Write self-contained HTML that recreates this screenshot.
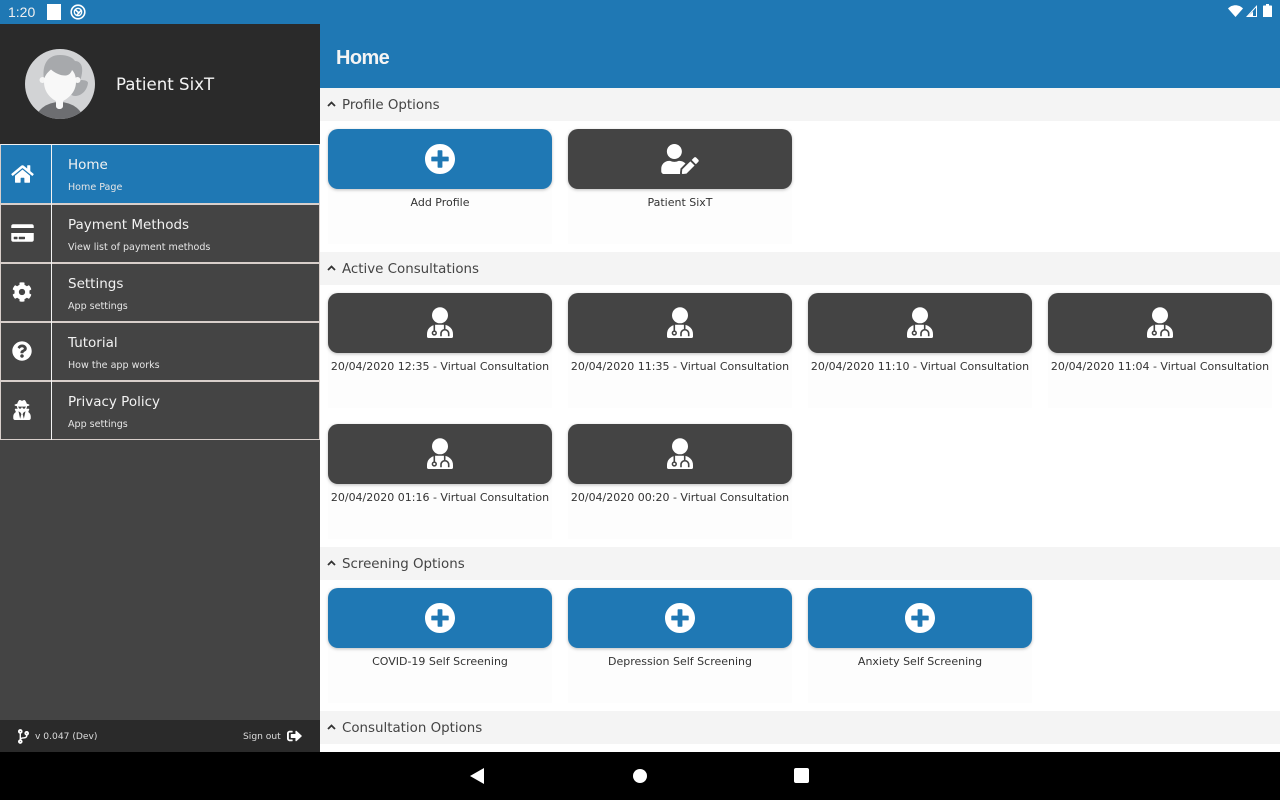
<!DOCTYPE html>
<html lang="en"><head><meta charset="utf-8"><title>Home</title>
<style>
*{box-sizing:border-box;margin:0;padding:0}
html,body{width:1280px;height:800px;overflow:hidden;background:#fff;font-family:"DejaVu Sans","Liberation Sans",sans-serif}
.a{position:absolute;white-space:nowrap}
svg{position:absolute;display:block;fill:#fff}
#status{left:0;top:0;width:1280px;height:24px;background:#1f78b4}
#side{left:0;top:24px;width:320px;height:728px;background:#444}
#prof{left:0;top:24px;width:320px;height:120px;background:#2a2a2a}
.item{position:absolute;left:0;width:320px;height:59px;background:#444;border:1px solid #d8cfcb}
.item.on{height:60px;background:#1f78b4;border-top-color:#f2f2f2}
.item i{position:absolute;left:50px;top:-1px;bottom:-1px;width:1px;background:#f4f4f4}
.t{position:absolute;left:67px;color:#f2f2f2;font-size:13.500px;line-height:18px;white-space:nowrap}
.s{position:absolute;left:67px;color:#e6e6e6;font-size:9.550px;line-height:12px;white-space:nowrap}
#top{left:320px;top:24px;width:960px;height:64px;background:#1f78b4}
.band{position:absolute;left:320px;width:960px;height:33px;background:#f4f4f4;color:#444;font-size:13.400px;line-height:36px;padding-left:22px}
.band svg{left:7px;top:13px;fill:none;stroke:#333;stroke-width:1.800}
.cell{position:absolute;width:224px;height:115px;background:#fdfdfd}
.btn{position:absolute;left:0;top:0;width:224px;height:60px;border-radius:10px;background:#444;box-shadow:0 1px 3px rgba(0,0,0,.25)}
.btn.b{background:#1f78b4}
.lab{position:absolute;left:-10px;width:244px;top:66px;text-align:center;font-size:11px;line-height:16px;color:#333;white-space:nowrap}
.plus{left:97px;top:15px;width:30px;height:30px}
.md{left:99px;top:14px;width:26px;height:32px}
#foot{left:0;top:720px;width:320px;height:32px;background:#2a2a2a;color:#ddd;font-size:9.150px;line-height:34px}
#nav{left:0;top:752px;width:1280px;height:48px;background:#000}
</style></head><body>
<svg width="0" height="0" style="position:absolute"><defs>
<symbol id="plus" viewBox="8 8 496 496"><path d="M256 8C119 8 8 119 8 256s111 248 248 248 248-111 248-248S393 8 256 8zm144 276c0 6.600-5.400 12-12 12h-92v92c0 6.600-5.400 12-12 12h-56c-6.600 0-12-5.400-12-12v-92h-92c-6.600 0-12-5.400-12-12v-56c0-6.600 5.400-12 12-12h92v-92c0-6.600 5.400-12 12-12h56c6.600 0 12 5.400 12 12v92h92c6.600 0 12 5.400 12 12v56z"/></symbol>
<symbol id="md" viewBox="0 0 26 32"><circle cx="13" cy="8.300" r="8"/><path d="M0 29.500V27C0 22 3.500 18.700 8 17.700H18C22.500 18.700 26 22 26 27V29.500C26 30.500 25.300 31 24.500 31H1.500C.7 31 0 30.500 0 29.500Z"/><path d="M7.300 17.500V24M17.700 17.500V22.500M14 29.200V26.500a3.850 3.850 0 0 1 7.700 0v2.700" fill="none" stroke="#444" stroke-width="1.600"/><circle cx="7.300" cy="26" r="1.900" fill="#fff" stroke="#444" stroke-width="1.500"/></symbol>
<symbol id="chev" viewBox="0 0 9 6"><path d="M1 5l3.500-3.500L8 5"/></symbol>
</defs></svg>

<div class="a" id="status">
  <span class="a" style="left:8px;top:3px;font:14px/18px 'Liberation Sans',sans-serif;color:#f0f0f0">1:20</span>
  <div class="a" style="left:47px;top:4px;width:14px;height:16px;background:#fff"></div>
  <svg style="left:70px;top:4px" width="16" height="16" viewBox="0 0 16 16"><circle cx="8" cy="8" r="6.800" fill="none" stroke="#fff" stroke-width="1.600"/><circle cx="8" cy="8" r="3.700" fill="none" stroke="#fff" stroke-width="1.300"/><path d="M5 5.500L9.500 9.500M7 11L11 6.500" stroke="#fff" stroke-width="1.600" fill="none"/></svg>
  <svg style="left:1228px;top:5px" width="15" height="12" viewBox="0 0 15 12"><path d="M0 3.500C4-.8 11-.8 15 3.500L7.500 12z"/></svg>
  <svg style="left:1246px;top:5px" width="11" height="12" viewBox="0 0 11 12"><path d="M11 0v12H0zM10 2.500L2.500 11H10z" fill-rule="evenodd"/><path d="M7 6.500V12H1.500z"/></svg>
  <svg style="left:1263px;top:4px" width="9" height="13" viewBox="0 0 9 13"><path d="M3 0h3v1.500h2.200c.5 0 .8.300.8.800V13H0V2.300c0-.5.300-.8.800-.8H3z"/></svg>
</div>

<div class="a" id="side"></div>
<div class="a" id="prof">
  <svg style="left:25px;top:25px" width="70" height="70" viewBox="0 0 70 70">
    <defs><clipPath id="cc"><circle cx="35" cy="35" r="35"/></clipPath></defs>
    <g clip-path="url(#cc)">
      <rect width="70" height="70" fill="#d2d3d5"/>
      <ellipse cx="34.500" cy="72" rx="24" ry="19" fill="#6d6e71"/>
      <path d="M19 30C17 18 21 6 35 6 43 6 48 9 50 12 56 12 58 18 57 24 56.500 27 56 29 55.500 31 60 31 63 32 63 34 62 42 56 47 50 47 46 47 45 44 45 42L20 34Z" fill="#a7a9ac"/>
      <circle cx="17.500" cy="31" r="3" fill="#f5f5f5"/><circle cx="52.500" cy="31" r="3" fill="#f5f5f5"/>
      <path d="M19 33C19 27 22 24 26 20.500 30 24 36 27 41 26.500 44 26 46 24 47 21 50 24 51 28 51 33 51 44 42 50 38 52V57C38 61 31 61 31 57V52C27 50 19 44 19 33Z" fill="#f8f8f8"/>
    </g>
  </svg>
  <span class="a" style="left:116px;top:50px;font-size:16.600px;line-height:22px;color:#f4f4f4">Patient SixT</span>
</div>

<div class="item on" style="top:144px"><i></i>
  <svg style="left:10px;top:19px" width="23" height="20" viewBox="0 0 576 512"><path d="M280.370 148.260L96 300.110V464a16 16 0 0 0 16 16l112.060-.29a16 16 0 0 0 15.920-16V368a16 16 0 0 1 16-16h64a16 16 0 0 1 16 16v95.640a16 16 0 0 0 16 16.050L464 480a16 16 0 0 0 16-16V300L295.670 148.260a12.190 12.190 0 0 0-15.300 0zM571.600 251.470L488 182.560V44.050a12 12 0 0 0-12-12h-56a12 12 0 0 0-12 12v72.610L318.470 43a48 48 0 0 0-61 0L4.340 251.470a12 12 0 0 0-1.600 16.900l25.500 31A12 12 0 0 0 45.150 301l235.220-193.740a12.190 12.190 0 0 1 15.300 0L530.900 301a12 12 0 0 0 16.900-1.600l25.500-31a12 12 0 0 0-1.700-16.930z"/></svg>
  <span class="t" style="top:11px">Home</span><span class="s" style="top:37px">Home Page</span></div>
<div class="item" style="top:204px"><i></i>
  <svg style="left:10px;top:18px" width="23" height="20" viewBox="0 0 576 512"><path d="M0 432c0 26.500 21.500 48 48 48h480c26.500 0 48-21.500 48-48V256H0v176zm192-68c0-6.600 5.400-12 12-12h136c6.600 0 12 5.400 12 12v40c0 6.600-5.400 12-12 12H204c-6.600 0-12-5.400-12-12v-40zm-128 0c0-6.600 5.400-12 12-12h72c6.600 0 12 5.400 12 12v40c0 6.600-5.400 12-12 12H76c-6.600 0-12-5.400-12-12v-40zM576 80v48H0V80c0-26.500 21.500-48 48-48h480c26.500 0 48 21.500 48 48z"/></svg>
  <span class="t" style="top:11px">Payment Methods</span><span class="s" style="top:37px">View list of payment methods</span></div>
<div class="item" style="top:263px"><i></i>
  <svg style="left:11px;top:18px" width="20" height="20" viewBox="0 0 512 512"><path d="M487.400 315.700l-42.600-24.600c4.300-23.200 4.300-47 0-70.200l42.600-24.600c4.900-2.800 7.100-8.600 5.500-14-11.100-35.600-30-67.800-54.700-94.600-3.800-4.100-10-5.100-14.800-2.300L380.800 110c-17.900-15.400-38.500-27.300-60.800-35.100V25.800c0-5.600-3.900-10.500-9.400-11.700-36.700-8.200-74.300-7.800-109.200 0-5.500 1.200-9.400 6.100-9.400 11.700V75c-22.200 7.900-42.800 19.800-60.800 35.100L88.700 85.500c-4.900-2.800-11-1.900-14.800 2.300-24.700 26.700-43.600 58.900-54.700 94.600-1.700 5.400.6 11.200 5.500 14L67.300 221c-4.300 23.200-4.300 47 0 70.200l-42.600 24.600c-4.900 2.800-7.100 8.600-5.500 14 11.100 35.600 30 67.800 54.700 94.600 3.800 4.100 10 5.100 14.800 2.300l42.600-24.600c17.900 15.400 38.500 27.300 60.800 35.100v49.200c0 5.600 3.900 10.500 9.400 11.700 36.700 8.200 74.300 7.800 109.200 0 5.500-1.200 9.400-6.100 9.400-11.700v-49.200c22.200-7.900 42.800-19.800 60.800-35.100l42.600 24.600c4.900 2.800 11 1.900 14.800-2.300 24.700-26.700 43.600-58.900 54.700-94.600 1.500-5.500-.7-11.300-5.600-14.100zM256 336c-44.100 0-80-35.900-80-80s35.900-80 80-80 80 35.900 80 80-35.900 80-80 80z"/></svg>
  <span class="t" style="top:11px">Settings</span><span class="s" style="top:37px">App settings</span></div>
<div class="item" style="top:322px"><i></i>
  <svg style="left:11px;top:18px" width="20" height="20" viewBox="0 0 512 512"><path d="M504 256c0 136.997-111.043 248-248 248S8 392.997 8 256C8 119.083 119.043 8 256 8s248 111.083 248 248zM262.655 90c-54.497 0-89.255 22.957-116.549 63.758-3.536 5.286-2.353 12.415 2.715 16.258l34.699 26.310c5.205 3.947 12.621 3.008 16.665-2.122 17.864-22.658 30.113-35.797 57.303-35.797 20.429 0 45.698 13.148 45.698 32.958 0 14.976-12.363 22.667-32.534 33.976C247.128 238.528 216 254.941 216 296v4c0 6.627 5.373 12 12 12h56c6.627 0 12-5.373 12-12v-1.333c0-28.462 83.186-29.647 83.186-106.667 0-58.002-60.165-102-116.531-102zM256 338c-25.365 0-46 20.635-46 46 0 25.364 20.635 46 46 46s46-20.636 46-46c0-25.365-20.635-46-46-46z"/></svg>
  <span class="t" style="top:11px">Tutorial</span><span class="s" style="top:37px">How the app works</span></div>
<div class="item" style="top:381px"><i></i>
  <svg style="left:12px;top:18px" width="18" height="20" viewBox="0 0 448 512"><path d="M383.900 308.300l23.900-62.600c4-10.500-3.700-21.700-15-21.700h-58.500c11-18.900 17.800-40.600 17.800-64v-.3c39.200-7.800 64-19.100 64-31.700 0-13.300-27.300-25.100-70.100-33-9.200-32.800-27-65.800-40.600-82.800-9.500-11.900-25.900-15.600-39.500-8.800l-27.600 13.800c-9 4.500-19.600 4.500-28.600 0L182.100 3.400c-13.600-6.800-30-3.100-39.500 8.800-13.500 17-31.400 50-40.600 82.800-42.700 7.900-70 19.700-70 33 0 12.600 24.800 23.900 64 31.700v.3c0 23.400 6.800 45.100 17.800 64H56.300c-11.500 0-19.200 11.700-14.700 22.300l25.800 60.200C27.300 329.800 0 372.700 0 422.400v44.800C0 491.900 20.100 512 44.800 512h358.400c24.700 0 44.800-20.100 44.800-44.800v-44.800c0-48.400-25.800-90.400-64.100-114.100zM176 480l-41.600-192 49.600 32 24 40-32 120zm96 0l-32-120 24-40 49.600-32L272 480zm41.700-298.500c-3.900 11.900-7 24.600-16.500 33.400-10.100 9.300-48 22.400-64-25-2.800-8.400-15.400-8.400-18.300 0-17 50.200-56 32.400-64 25-9.500-8.800-12.700-21.500-16.500-33.400-.8-2.500-6.300-5.700-6.300-5.800v-10.800c28.300 3.600 61 5.800 96 5.800s67.700-2.100 96-5.800v10.800c-.1.100-5.600 3.200-6.400 5.800z"/></svg>
  <span class="t" style="top:11px">Privacy Policy</span><span class="s" style="top:37px">App settings</span></div>

<div class="a" id="foot">
  <svg style="left:18px;top:9px" width="11" height="15" viewBox="0 0 384 512"><path d="M384 144c0-44.200-35.800-80-80-80s-80 35.800-80 80c0 36.400 24.300 67.100 57.500 76.800-.6 16.100-4.200 28.500-11 36.900-15.400 19.200-49.300 22.400-85.200 25.700-28.200 2.600-57.400 5.400-81.300 16.900v-144c32.500-10.200 56-40.500 56-76.300 0-44.200-35.800-80-80-80S0 35.800 0 80c0 35.800 23.500 66.100 56 76.300v199.300C23.500 365.900 0 396.200 0 432c0 44.200 35.800 80 80 80s80-35.800 80-80c0-34-21.200-63.100-51.200-74.600 3.100-5.200 7.800-9.800 14.900-13.400 16.200-8.200 40.400-10.400 66.100-12.800 42.200-3.900 90-8.400 118.200-43.400 14-17.400 21.100-39.800 21.600-67.900 31.600-10.800 54.400-40.700 54.400-75.900zM80 64c8.800 0 16 7.200 16 16s-7.200 16-16 16-16-7.200-16-16 7.200-16 16-16zm0 384c-8.800 0-16-7.200-16-16s7.200-16 16-16 16 7.200 16 16-7.200 16-16 16zm224-320c8.800 0 16 7.200 16 16s-7.200 16-16 16-16-7.200-16-16 7.200-16 16-16z"/></svg>
  <span class="a" style="left:35px;top:0">v 0.047 (Dev)</span>
  <span class="a" style="left:243px;top:0">Sign out</span>
  <svg style="left:287px;top:9px" width="15" height="14" viewBox="0 0 512 512" preserveAspectRatio="none"><path d="M497 273L329 441c-15 15-41 4.500-41-17v-96H152c-13.300 0-24-10.700-24-24v-96c0-13.300 10.700-24 24-24h136V88c0-21.400 25.900-32 41-17l168 168c9.300 9.400 9.300 24.600 0 34zM192 436v-40c0-6.600-5.400-12-12-12H96c-17.700 0-32-14.300-32-32V160c0-17.700 14.300-32 32-32h84c6.600 0 12-5.400 12-12V76c0-6.600-5.400-12-12-12H96c-53 0-96 43-96 96v192c0 53 43 96 96 96h84c6.600 0 12-5.400 12-12z"/></svg>
</div>

<div class="a" id="top"><span class="a" style="left:16px;top:20px;font:bold 20px/28px 'Liberation Sans',sans-serif;letter-spacing:-.6px;color:#f4f4f4">Home</span></div>

<div class="band" style="top:88px"><svg width="9" height="6"><use href="#chev"/></svg>Profile Options</div>
<div class="cell" style="left:328px;top:129px"><div class="btn b"><svg class="plus"><use href="#plus"/></svg></div><div class="lab">Add Profile</div></div>
<div class="cell" style="left:568px;top:129px"><div class="btn"><svg style="left:93px;top:15px" width="38" height="30" viewBox="0 0 640 512"><path d="M224 256c70.700 0 128-57.300 128-128S294.700 0 224 0 96 57.300 96 128s57.300 128 128 128zm89.600 32h-16.700c-22.200 10.200-46.900 16-72.900 16s-50.600-5.800-72.900-16h-16.700C60.200 288 0 348.200 0 422.400V464c0 26.500 21.500 48 48 48h274.900c-2.400-6.800-3.400-14-2.600-21.300l6.800-60.900 1.200-11.100 7.900-7.900 77.300-77.300c-24.500-27.700-60-45.500-99.900-45.500zm45.300 145.300l-6.800 61c-1.100 10.200 7.500 18.800 17.600 17.600l60.900-6.800 137.900-137.900-71.700-71.700-137.900 137.800zM633 268.900L595.100 231c-9.300-9.300-24.500-9.300-33.800 0l-37.800 37.800-4.100 4.100 71.800 71.700 41.800-41.800c9.300-9.400 9.300-24.500 0-33.900z"/></svg></div><div class="lab">Patient SixT</div></div>

<div class="band" style="top:252px"><svg width="9" height="6"><use href="#chev"/></svg>Active Consultations</div>
<div class="cell" style="left:328px;top:293px"><div class="btn"><svg class="md"><use href="#md"/></svg></div><div class="lab">20/04/2020 12:35 - Virtual Consultation</div></div>
<div class="cell" style="left:568px;top:293px"><div class="btn"><svg class="md"><use href="#md"/></svg></div><div class="lab">20/04/2020 11:35 - Virtual Consultation</div></div>
<div class="cell" style="left:808px;top:293px"><div class="btn"><svg class="md"><use href="#md"/></svg></div><div class="lab">20/04/2020 11:10 - Virtual Consultation</div></div>
<div class="cell" style="left:1048px;top:293px"><div class="btn"><svg class="md"><use href="#md"/></svg></div><div class="lab">20/04/2020 11:04 - Virtual Consultation</div></div>
<div class="cell" style="left:328px;top:424px"><div class="btn"><svg class="md"><use href="#md"/></svg></div><div class="lab">20/04/2020 01:16 - Virtual Consultation</div></div>
<div class="cell" style="left:568px;top:424px"><div class="btn"><svg class="md"><use href="#md"/></svg></div><div class="lab">20/04/2020 00:20 - Virtual Consultation</div></div>

<div class="band" style="top:547px"><svg width="9" height="6"><use href="#chev"/></svg>Screening Options</div>
<div class="cell" style="left:328px;top:588px"><div class="btn b"><svg class="plus"><use href="#plus"/></svg></div><div class="lab">COVID-19 Self Screening</div></div>
<div class="cell" style="left:568px;top:588px"><div class="btn b"><svg class="plus"><use href="#plus"/></svg></div><div class="lab">Depression Self Screening</div></div>
<div class="cell" style="left:808px;top:588px"><div class="btn b"><svg class="plus"><use href="#plus"/></svg></div><div class="lab">Anxiety Self Screening</div></div>

<div class="band" style="top:711px"><svg width="9" height="6"><use href="#chev"/></svg>Consultation Options</div>

<div class="a" id="nav">
  <svg style="left:470px;top:16px" width="14" height="16" viewBox="0 0 14 16"><path d="M14 0v16L0 8z"/></svg>
  <svg style="left:633px;top:17px" width="14" height="14" viewBox="0 0 14 14"><circle cx="7" cy="7" r="7"/></svg>
  <div class="a" style="left:794px;top:16px;width:15px;height:15px;background:#fff;border-radius:2px"></div>
</div>
</body></html>
